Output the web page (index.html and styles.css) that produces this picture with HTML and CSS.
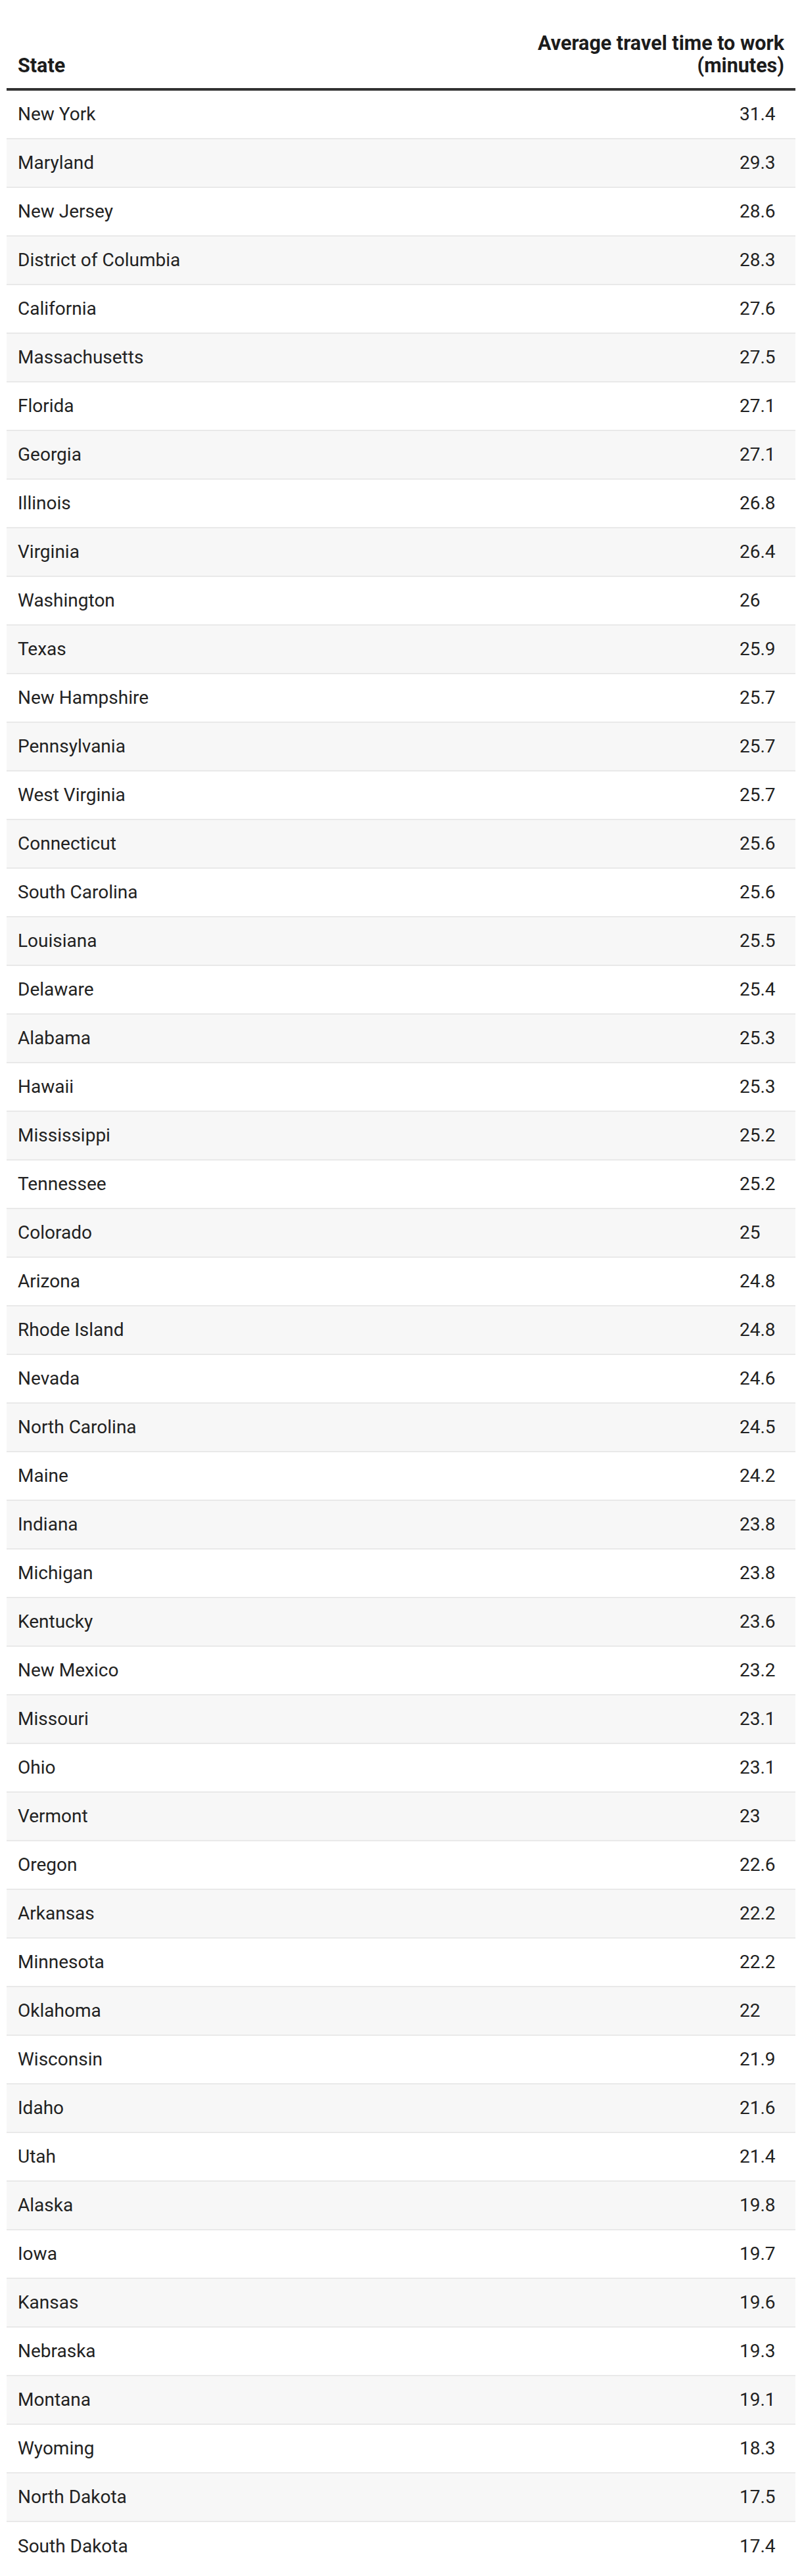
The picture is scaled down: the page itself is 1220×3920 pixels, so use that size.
FILE: index.html
```html
<!DOCTYPE html>
<html lang="en">
<head>
<meta charset="utf-8">
<title>Average travel time to work</title>
<link rel="stylesheet" href="styles.css">
</head>
<body>
<div class="page">
  <div class="table" role="table">
    <div class="head" role="row">
      <div class="th th-state" role="columnheader">State</div>
      <div class="th th-value" role="columnheader">Average travel time to work<br>(minutes)</div>
    </div>
    <div class="row"><div class="state">New York</div><div class="value"><span>31.4</span></div></div>
    <div class="row"><div class="state">Maryland</div><div class="value"><span>29.3</span></div></div>
    <div class="row"><div class="state">New Jersey</div><div class="value"><span>28.6</span></div></div>
    <div class="row"><div class="state">District of Columbia</div><div class="value"><span>28.3</span></div></div>
    <div class="row"><div class="state">California</div><div class="value"><span>27.6</span></div></div>
    <div class="row"><div class="state">Massachusetts</div><div class="value"><span>27.5</span></div></div>
    <div class="row"><div class="state">Florida</div><div class="value"><span>27.1</span></div></div>
    <div class="row"><div class="state">Georgia</div><div class="value"><span>27.1</span></div></div>
    <div class="row"><div class="state">Illinois</div><div class="value"><span>26.8</span></div></div>
    <div class="row"><div class="state">Virginia</div><div class="value"><span>26.4</span></div></div>
    <div class="row"><div class="state">Washington</div><div class="value"><span>26</span></div></div>
    <div class="row"><div class="state">Texas</div><div class="value"><span>25.9</span></div></div>
    <div class="row"><div class="state">New Hampshire</div><div class="value"><span>25.7</span></div></div>
    <div class="row"><div class="state">Pennsylvania</div><div class="value"><span>25.7</span></div></div>
    <div class="row"><div class="state">West Virginia</div><div class="value"><span>25.7</span></div></div>
    <div class="row"><div class="state">Connecticut</div><div class="value"><span>25.6</span></div></div>
    <div class="row"><div class="state">South Carolina</div><div class="value"><span>25.6</span></div></div>
    <div class="row"><div class="state">Louisiana</div><div class="value"><span>25.5</span></div></div>
    <div class="row"><div class="state">Delaware</div><div class="value"><span>25.4</span></div></div>
    <div class="row"><div class="state">Alabama</div><div class="value"><span>25.3</span></div></div>
    <div class="row"><div class="state">Hawaii</div><div class="value"><span>25.3</span></div></div>
    <div class="row"><div class="state">Mississippi</div><div class="value"><span>25.2</span></div></div>
    <div class="row"><div class="state">Tennessee</div><div class="value"><span>25.2</span></div></div>
    <div class="row"><div class="state">Colorado</div><div class="value"><span>25</span></div></div>
    <div class="row"><div class="state">Arizona</div><div class="value"><span>24.8</span></div></div>
    <div class="row"><div class="state">Rhode Island</div><div class="value"><span>24.8</span></div></div>
    <div class="row"><div class="state">Nevada</div><div class="value"><span>24.6</span></div></div>
    <div class="row"><div class="state">North Carolina</div><div class="value"><span>24.5</span></div></div>
    <div class="row"><div class="state">Maine</div><div class="value"><span>24.2</span></div></div>
    <div class="row"><div class="state">Indiana</div><div class="value"><span>23.8</span></div></div>
    <div class="row"><div class="state">Michigan</div><div class="value"><span>23.8</span></div></div>
    <div class="row"><div class="state">Kentucky</div><div class="value"><span>23.6</span></div></div>
    <div class="row"><div class="state">New Mexico</div><div class="value"><span>23.2</span></div></div>
    <div class="row"><div class="state">Missouri</div><div class="value"><span>23.1</span></div></div>
    <div class="row"><div class="state">Ohio</div><div class="value"><span>23.1</span></div></div>
    <div class="row"><div class="state">Vermont</div><div class="value"><span>23</span></div></div>
    <div class="row"><div class="state">Oregon</div><div class="value"><span>22.6</span></div></div>
    <div class="row"><div class="state">Arkansas</div><div class="value"><span>22.2</span></div></div>
    <div class="row"><div class="state">Minnesota</div><div class="value"><span>22.2</span></div></div>
    <div class="row"><div class="state">Oklahoma</div><div class="value"><span>22</span></div></div>
    <div class="row"><div class="state">Wisconsin</div><div class="value"><span>21.9</span></div></div>
    <div class="row"><div class="state">Idaho</div><div class="value"><span>21.6</span></div></div>
    <div class="row"><div class="state">Utah</div><div class="value"><span>21.4</span></div></div>
    <div class="row"><div class="state">Alaska</div><div class="value"><span>19.8</span></div></div>
    <div class="row"><div class="state">Iowa</div><div class="value"><span>19.7</span></div></div>
    <div class="row"><div class="state">Kansas</div><div class="value"><span>19.6</span></div></div>
    <div class="row"><div class="state">Nebraska</div><div class="value"><span>19.3</span></div></div>
    <div class="row"><div class="state">Montana</div><div class="value"><span>19.1</span></div></div>
    <div class="row"><div class="state">Wyoming</div><div class="value"><span>18.3</span></div></div>
    <div class="row"><div class="state">North Dakota</div><div class="value"><span>17.5</span></div></div>
    <div class="row"><div class="state">South Dakota</div><div class="value"><span>17.4</span></div></div>
  </div>
</div>
</body>
</html>
```

FILE: styles.css
```css
* { box-sizing: border-box; }
html, body { margin: 0; padding: 0; background: #ffffff; }
body {
  font-family: Roboto, "Noto Sans", "Liberation Sans", sans-serif;
  color: #222222;
}
.page {
  padding: 32.5px 10px 0 10px;
}
.table {
  width: 1200px;
}
.head {
  display: flex;
  align-items: flex-end;
  justify-content: space-between;
  border-bottom: 4px solid #333333;
}
.th {
  font-size: 30.5px;
  font-weight: 700;
  line-height: 34px;
  color: #1c1c1c;
  padding: 16px 17px 17.5px 17px;
}
.th-value {
  text-align: right;
}
.row {
  display: flex;
  align-items: center;
  justify-content: space-between;
  height: 74px;
  border-bottom: 2px solid #e9e9e9;
  font-size: 28px;
  line-height: 32px;
  padding: 0 17px;
}
.row:nth-child(odd) {
  background: #f7f7f7;
}
.row:last-child {
  border-bottom: none;
}
.value span {
  display: inline-block;
  width: 68px;
  text-align: left;
}
```
